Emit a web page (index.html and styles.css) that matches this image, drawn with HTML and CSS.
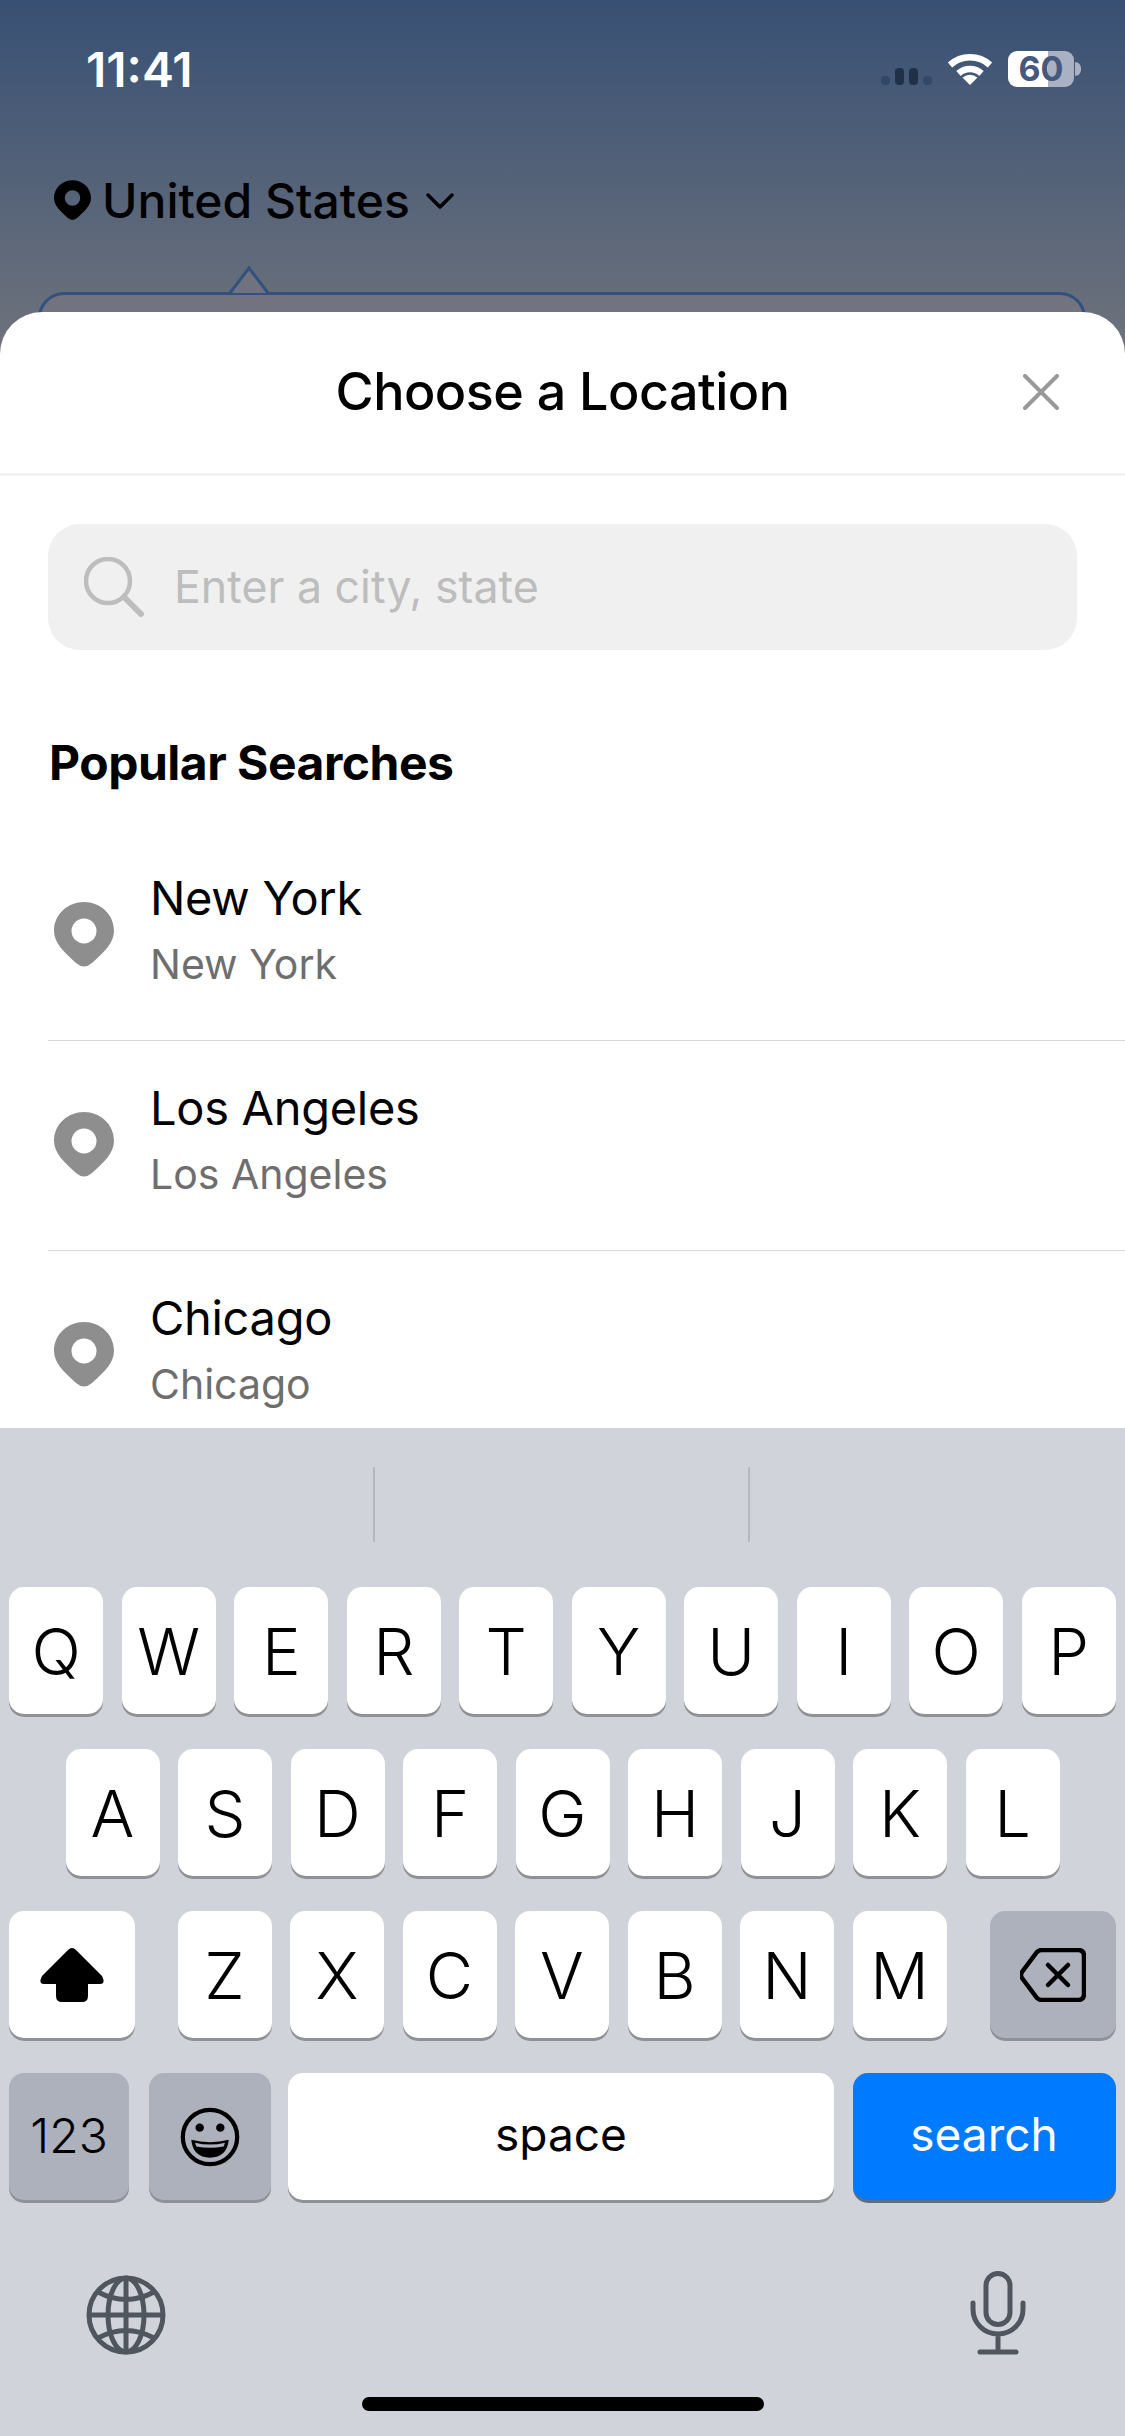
FILE: index.html
```html
<!DOCTYPE html>
<html lang="en">
<head>
    <meta charset="UTF-8">
    <meta name="viewport" content="width=device-width, initial-scale=1.0">
    <title>Choose a Location</title>
    <link rel="stylesheet" href="styles.css">
</head>
<body>
    <div class="page">
        <header class="hero">
            <div class="status">
                <span class="clock">11:41</span>
                <div class="status-icons">
                    <div class="signal">
                        <i class="dot"></i><i class="bar"></i><i class="bar"></i><i class="dot"></i>
                    </div>
                    <svg class="wifi" viewBox="0 0 46 33">
                        <path d="M3 13 A30 30 0 0 1 43 13" fill="none" stroke="#fff" stroke-width="6.5"/>
                        <path d="M11.500 21.500 A17 17 0 0 1 34.500 21.500" fill="none" stroke="#fff" stroke-width="6.500"/>
                        <path d="M23 33 L15.500 25.500 Q23 20 30.500 25.500 Z" fill="#fff"/>
                    </svg>
                    <div class="battery"><span class="battery-level">60</span><i class="battery-cap"></i></div>
                </div>
            </div>
            <div class="country">
                <svg class="country-pin" viewBox="0 0 60 66">
                    <path fill-rule="evenodd" d="M30 0C46 0 60 12 60 29C60 41 50 50 38 61Q30 68 22 61C10 50 0 41 0 29C0 12 14 0 30 0ZM30 16.500A12.500 12.500 0 1 0 30 41.500A12.500 12.500 0 1 0 30 16.500Z"/>
                </svg>
                <span class="country-name">United States</span>
                <svg class="chevron" viewBox="0 0 28 17">
                    <path d="M2 2L14 14L26 2" fill="none" stroke="#000" stroke-width="3.500" stroke-linecap="round" stroke-linejoin="round"/>
                </svg>
            </div>
            <div class="bubble">
                <svg class="bubble-tip" viewBox="0 0 38 29">
                    <path d="M0 27L19 2L38 27" fill="#70727e" stroke="#34507e" stroke-width="3"/>
                </svg>
            </div>
        </header>

        <main class="sheet">
            <div class="sheet-head">
                <h1 class="sheet-title">Choose a Location</h1>
                <svg class="close" viewBox="0 0 36 36">
                    <path d="M2 2L34 34M34 2L2 34" stroke="#999" stroke-width="4" stroke-linecap="round"/>
                </svg>
            </div>
            <div class="search">
                <svg class="search-icon" viewBox="0 0 60 60">
                    <circle cx="24" cy="24" r="22" fill="none" stroke="#bdbdbd" stroke-width="4.500"/>
                    <path d="M40 40L57 57" stroke="#bdbdbd" stroke-width="6" stroke-linecap="round"/>
                </svg>
                <span class="placeholder">Enter a city, state</span>
            </div>
            <h2 class="section-title">Popular Searches</h2>
            <ul class="places">
                <li class="place">
                    <svg class="place-pin" viewBox="0 0 60 66">
                        <path fill-rule="evenodd" fill="#8e8e8e" d="M30 0C46 0 60 12 60 29C60 41 50 50 38 61Q30 68 22 61C10 50 0 41 0 29C0 12 14 0 30 0ZM30 16.500A12.500 12.500 0 1 0 30 41.500A12.500 12.500 0 1 0 30 16.500Z"/>
                    </svg>
                    <div class="place-text">
                        <span class="place-name">New York</span>
                        <span class="place-sub">New York</span>
                    </div>
                </li>
                <li class="place">
                    <svg class="place-pin" viewBox="0 0 60 66">
                        <path fill-rule="evenodd" fill="#8e8e8e" d="M30 0C46 0 60 12 60 29C60 41 50 50 38 61Q30 68 22 61C10 50 0 41 0 29C0 12 14 0 30 0ZM30 16.500A12.500 12.500 0 1 0 30 41.500A12.500 12.500 0 1 0 30 16.500Z"/>
                    </svg>
                    <div class="place-text">
                        <span class="place-name">Los Angeles</span>
                        <span class="place-sub">Los Angeles</span>
                    </div>
                </li>
                <li class="place">
                    <svg class="place-pin" viewBox="0 0 60 66">
                        <path fill-rule="evenodd" fill="#8e8e8e" d="M30 0C46 0 60 12 60 29C60 41 50 50 38 61Q30 68 22 61C10 50 0 41 0 29C0 12 14 0 30 0ZM30 16.500A12.500 12.500 0 1 0 30 41.500A12.500 12.500 0 1 0 30 16.500Z"/>
                    </svg>
                    <div class="place-text">
                        <span class="place-name">Chicago</span>
                        <span class="place-sub">Chicago</span>
                    </div>
                </li>
            </ul>
        </main>

        <section class="keyboard">
            <div class="suggestions">
                <i class="suggestion-line"></i>
                <i class="suggestion-line"></i>
            </div>
            <div class="keys">
                <div class="key-row">
                    <span class="key">Q</span><span class="key">W</span><span class="key">E</span><span class="key">R</span><span class="key">T</span><span class="key">Y</span><span class="key">U</span><span class="key">I</span><span class="key">O</span><span class="key">P</span>
                </div>
                <div class="key-row">
                    <span class="key">A</span><span class="key">S</span><span class="key">D</span><span class="key">F</span><span class="key">G</span><span class="key">H</span><span class="key">J</span><span class="key">K</span><span class="key">L</span>
                </div>
                <div class="key-row key-row-wide">
                    <span class="key key-mod key-white">
                        <svg class="shift" viewBox="0 0 64 54">
                            <path d="M32 0Q34 0 36 2L62 28Q66 36 60 36H48V48Q48 54 42 54H22Q16 54 16 48V36H4Q-2 36 2 28L28 2Q30 0 32 0Z"/>
                        </svg>
                    </span>
                    <div class="key-group">
                        <span class="key">Z</span><span class="key">X</span><span class="key">C</span><span class="key">V</span><span class="key">B</span><span class="key">N</span><span class="key">M</span>
                    </div>
                    <span class="key key-mod key-dark">
                        <svg class="delete" viewBox="0 0 66 54">
                            <path d="M22 2H58Q64 2 64 8V46Q64 52 58 52H22Q19 52 17 50L2 30Q0 27 2 24L17 4Q19 2 22 2Z" fill="none" stroke="#000" stroke-width="4.500"/>
                            <path d="M28 17L48 37M48 17L28 37" stroke="#000" stroke-width="4.500" stroke-linecap="round"/>
                        </svg>
                    </span>
                </div>
                <div class="key-row key-row-bottom">
                    <span class="key key-small key-dark key-123">123</span>
                    <span class="key key-dark key-emoji">
                        <svg class="emoji" viewBox="0 0 64 64">
                            <circle cx="32" cy="32" r="29" fill="none" stroke="#000" stroke-width="4.500"/>
                            <circle cx="21" cy="22" r="4.500"/>
                            <circle cx="43" cy="22" r="4.500"/>
                            <path d="M12 35Q32 40 52 35Q50 54 32 54Q14 54 12 35Z"/>
                            <path d="M16 38Q32 42 48 38L46.500 42Q32 45 17.500 42Z" fill="#adb1bb"/>
                        </svg>
                    </span>
                    <span class="key key-small key-space">space</span>
                    <span class="key key-small key-search">search</span>
                </div>
            </div>
            <div class="keyboard-foot">
                <svg class="globe" viewBox="0 0 80 80">
                    <g fill="none" stroke="#50565e" stroke-width="5">
                        <circle cx="40" cy="40" r="37"/>
                        <ellipse cx="40" cy="40" rx="18" ry="37"/>
                        <path d="M40 3V77M3 40H77M12 17Q40 32 68 17M12 63Q40 48 68 63"/>
                    </g>
                </svg>
                <svg class="mic" viewBox="0 0 56 84">
                    <g fill="none" stroke="#50565e" stroke-width="5" stroke-linecap="round">
                        <rect x="16" y="2.500" width="24" height="51" rx="12"/>
                        <path d="M3 32V38C3 52 14 63 28 63C42 63 53 52 53 38V32M28 63V81M10 81H46"/>
                    </g>
                </svg>
            </div>
            <div class="home-bar"></div>
        </section>
    </div>
</body>
</html>
```

FILE: styles.css
```css
* {
    box-sizing: border-box;
}
body {
    margin: 0;
    font-family: Inter, "Liberation Sans", sans-serif;
    color: #000;
}
.page {
    display: flex;
    flex-direction: column;
    width: 1125px;
    height: 2436px;
    overflow: hidden;
}

/* top of the page, behind the sheet */
.hero {
    height: 360px;
    flex: none;
    padding: 0 39px 0 38px;
    background: linear-gradient(#385074, #70747c);
    overflow: hidden;
}
.status {
    display: flex;
    justify-content: space-between;
    align-items: center;
    height: 36px;
    margin-top: 51px;
    padding: 0 5px 0 48px;
}
.clock {
    color: #fff;
    font-size: 48px;
    font-weight: 600;
    letter-spacing: 0;
}
.status-icons {
    display: flex;
    align-items: flex-end;
}
.signal {
    display: flex;
    align-items: flex-end;
    gap: 5px;
    margin-right: 15px;
    padding-bottom: 2px;
}
.signal i {
    display: block;
    width: 9px;
    border-radius: 4px;
}
.signal .dot {
    height: 9px;
    background: #30486a;
}
.signal .bar {
    height: 17px;
    background: #1f3048;
}
.wifi {
    width: 46px;
    height: 33px;
    margin-right: 15px;
    margin-bottom: 2px;
}
.battery {
    display: flex;
    align-items: center;
    height: 36px;
}
.battery-level {
    width: 66px;
    height: 36px;
    border-radius: 9px;
    background: linear-gradient(90deg, #fff 60%, #a9b1c2 60%);
    color: #44597b;
    font-size: 34px;
    font-weight: 700;
    line-height: 36px;
    text-align: center;
}
.battery-cap {
    width: 6px;
    height: 14px;
    margin-left: 1px;
    border-radius: 0 7px 7px 0;
    background: #a9b1c2;
}
.country {
    display: flex;
    align-items: center;
    height: 50px;
    margin-top: 88px;
    padding-left: 16px;
}
.country-pin {
    width: 37px;
    height: 41px;
}
.country-name {
    margin-left: 11px;
    font-size: 48px;
    font-weight: 500;
}
.chevron {
    width: 28px;
    height: 17px;
    margin: 2px 0 0 16px;
}
.bubble {
    position: relative;
    height: 100px;
    margin-top: 67px;
    border: 3px solid #34507e;
    border-radius: 26px;
    background: #72737f;
}
.bubble-tip {
    position: absolute;
    left: 189px;
    top: -29px;
    width: 38px;
    height: 29px;
    overflow: visible;
}

/* white sheet */
.sheet {
    flex: 1;
    min-height: 0;
    margin-top: -48px;
    border-radius: 42px 42px 0 0;
    background: #fff;
    overflow: hidden;
    position: relative;
}
.sheet-head {
    display: flex;
    justify-content: center;
    align-items: center;
    position: relative;
    height: 164px;
    padding-bottom: 2px;
    border-bottom: 3px solid #f2f2f2;
}
.sheet-title {
    margin: 0;
    font-size: 52px;
    font-weight: 500;
    letter-spacing: -0.5px;
}
.close {
    position: absolute;
    right: 66px;
    top: 62px;
    width: 36px;
    height: 36px;
}
.search {
    display: flex;
    align-items: center;
    height: 126px;
    margin: 48px 48px 0;
    padding-left: 36px;
    border-radius: 32px;
    background: #f0f0f0;
}
.search-icon {
    width: 60px;
    height: 60px;
}
.placeholder {
    margin-left: 30px;
    color: #bdbdbd;
    font-size: 44.7px;
}
.section-title {
    margin: 83px 0 0 49px;
    font-size: 48px;
    font-weight: 700;
    line-height: 60px;
    letter-spacing: -0.5px;
}
.places {
    margin: 37.5px 0 0;
    padding: 0 0 0 48px;
    list-style: none;
}
.place {
    display: flex;
    align-items: center;
    height: 210px;
    border-bottom: 1.5px solid #d6d6d6;
}
.place-pin {
    width: 60px;
    height: 66px;
    margin-left: 6px;
}
.place-text {
    display: flex;
    flex-direction: column;
    gap: 10px;
    margin-left: 36px;
    padding-bottom: 8px;
}
.place-name {
    font-size: 47px;
    line-height: 56px;
    letter-spacing: -0.3px;
}
.place-sub {
    color: #6e6e6e;
    font-size: 41px;
    line-height: 56px;
}

/* keyboard */
.keyboard {
    flex: none;
    height: 1008px;
    background: #d0d3d9;
    display: flex;
    flex-direction: column;
}
.suggestions {
    display: flex;
    justify-content: center;
    gap: 373px;
    height: 159px;
    padding: 39px 3px 0 0;
}
.suggestion-line {
    width: 2px;
    height: 75px;
    background: #b5b8bf;
}
.keys {
    display: flex;
    flex-direction: column;
    gap: 35px;
    padding: 0 9px;
}
.key-row {
    display: flex;
    justify-content: center;
    gap: 18.5px;
}
.key-row-wide {
    justify-content: space-between;
}
.key-row-bottom {
    justify-content: flex-start;
}
.key-group {
    display: flex;
    gap: 18.5px;
    margin-left: -1px;
}
.key {
    display: flex;
    justify-content: center;
    align-items: center;
    width: 94px;
    height: 127px;
    padding-top: 2px;
    border-radius: 15px;
    background: #fff;
    box-shadow: 0 3px 0 #8f9196;
    font-size: 65px;
    font-weight: 350;
}
.key-mod {
    width: 126px;
    padding-top: 0;
}
.key-white {
    background: #fff;
}
.key-dark {
    background: #adb1bb;
}
.key-small {
    padding: 0 0 6px;
    font-size: 46px;
    font-weight: 400;
}
.key-123 {
    width: 120px;
    padding-bottom: 3px;
    font-size: 48px;
    font-weight: 300;
}
.key-emoji {
    width: 122px;
    margin-left: 1.5px;
    padding: 0;
}
.key-space {
    width: 546px;
    margin-left: -1.5px;
}
.key-search {
    width: 263px;
    background: #007aff;
    box-shadow: 0 3px 0 #5f6d80;
    color: #fff;
}
.shift {
    width: 64px;
    height: 54px;
}
.delete {
    width: 66px;
    height: 54px;
}
.emoji {
    width: 60px;
    height: 60px;
}
.keyboard-foot {
    display: flex;
    justify-content: space-between;
    align-items: flex-end;
    height: 155px;
    padding: 0 99px 0 86px;
}
.globe {
    width: 80px;
    height: 80px;
}
.mic {
    width: 56px;
    height: 84px;
}
.home-bar {
    width: 402px;
    height: 14px;
    margin: 42px auto 0;
    border-radius: 7px;
    background: #000;
}
```
